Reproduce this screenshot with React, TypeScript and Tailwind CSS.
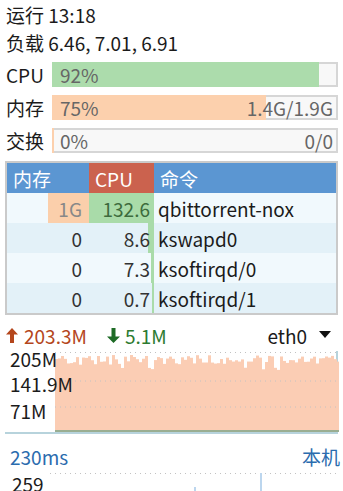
import React from "react";

const FONT = "font-['Noto_Sans_CJK_SC',sans-serif]";

// deterministic pseudo random values for the traffic chart
const makeSeries = (n: number, seed: number) => {
    let s = seed;
    const out: number[] = [];
    for (let i = 0; i < n; i++) {
        s = (s * 9301 + 49297) % 233280;
        const r = s / 233280;
        if (r < 0.08) out.push(15 + r * 50);
        else out.push(4 + ((r * 37) % 10));
    }
    return out;
};

const upSeries = makeSeries(95, 11);

const UsageBar: React.FC<{
    label: string;
    percent: number;
    fill: string;
    left: string;
    right?: string;
}> = ({ label, percent, fill, left, right }) => {
    return (
        <div className="flex items-center h-[25px]">
            <div className="w-[52px] pl-[6px] text-[19px] leading-none text-[#1b1b1b]">
                {label}
            </div>
            <div className="relative flex-1 mr-[5px] h-[25px] border-2 border-[#d6d6d6] bg-[#f8f8f8]">
                <div
                    className={`absolute -left-[2px] -top-[2px] -bottom-[2px] ${fill}`}
                    style={{ width: `calc(${percent}% + 2px)` }}
                />
                <div className="relative flex items-center justify-between h-full pl-[6px] pr-[3px] text-[19px] leading-none text-[#666]">
                    <span>{left}</span>
                    <span>{right}</span>
                </div>
            </div>
        </div>
    );
};

const rows = [
    { mem: "1G", memPct: 50, cpu: "132.6", cpuPct: 100, cmd: "qbittorrent-nox" },
    { mem: "0", memPct: 0, cpu: "8.6", cpuPct: 8.6, cmd: "kswapd0" },
    { mem: "0", memPct: 0, cpu: "7.3", cpuPct: 5, cmd: "ksoftirqd/0" },
    { mem: "0", memPct: 0, cpu: "0.7", cpuPct: 3, cmd: "ksoftirqd/1" },
];

const ProcessTable = () => {
    return (
        <div className="mx-[5px] border-2 border-[#cacaca] text-[19px] leading-none">
            <div className="flex h-[30px] bg-[#5b96d2] text-white">
                <div className="w-[82px] flex items-center pl-[6px]">内存</div>
                <div className="w-[65px] flex items-center pl-[6px] bg-[#cb624e]">CPU</div>
                <div className="flex-1 flex items-center pl-[6px]">命令</div>
            </div>
            {rows.map((r, i) => (
                <div
                    key={r.cmd}
                    className={`flex h-[30px] ${i % 2 === 0 ? "bg-[#f1f9fd]" : "bg-[#e3f1f8]"}`}
                >
                    <div className="w-[82px] flex justify-end">
                        <div
                            className={`flex items-center justify-end h-full pr-[7px] ${
                                r.memPct > 0 ? "bg-[#fbcfab] text-[#888]" : "text-[#333]"
                            }`}
                            style={{ width: r.memPct > 0 ? `${r.memPct}%` : "auto" }}
                        >
                            {r.mem}
                        </div>
                    </div>
                    <div className="relative w-[65px] flex items-center justify-end pr-[4px]">
                        <div
                            className="absolute right-0 top-0 bottom-0 bg-[#a9dba9]"
                            style={{ width: `${r.cpuPct}%` }}
                        />
                        <span className={`relative ${i === 0 ? "text-[#3d6b3d]" : "text-[#333]"}`}>
                            {r.cpu}
                        </span>
                    </div>
                    <div className="flex-1 flex items-center pl-[4px] text-[#1b1b1b]">{r.cmd}</div>
                </div>
            ))}
        </div>
    );
};

const UpArrow = ({ color }: { color: string }) => (
    <svg width="12" height="15" viewBox="0 0 12 15">
        <path d="M6 0 L12 6.5 L8 6.5 L8 15 L4 15 L4 6.5 L0 6.5 Z" fill={color} />
    </svg>
);

const DownArrow = ({ color }: { color: string }) => (
    <svg width="13" height="15" viewBox="0 0 13 15">
        <path d="M6.5 15 L13 8.5 L8.5 8.5 L8.5 0 L4.5 0 L4.5 8.5 L0 8.5 Z" fill={color} />
    </svg>
);

const TrafficChart = () => {
    const w = 284;
    const h = 81;
    return (
        <div className="relative mx-[5px] h-[83px] border-b-2 border-r-2 border-[#b7d3dc]">
            <svg width={w} height={h} className="block ml-[50px]">
                {upSeries.map((top, i) => (
                    <rect key={i} x={i * 3} y={top} width={3} height={h - top} fill="#fbcdb4" />
                ))}
                <rect x={0} y={h - 2} width={w} height={2} fill="#9aae92" />
                {[1.5, 30, 56].map((y) => (
                    <line
                        key={y}
                        x1={0}
                        x2={w}
                        y1={y}
                        y2={y}
                        stroke="#c2c2c2"
                        strokeWidth={1}
                        strokeDasharray="1 4"
                    />
                ))}
            </svg>
            <div className="absolute left-[5px] top-[-2px] text-[19px] leading-[20px] text-[#1b1b1b]">205M</div>
            <div className="absolute left-[5px] top-[23px] text-[19px] leading-[20px] text-[#1b1b1b]">141.9M</div>
            <div className="absolute left-[5px] top-[50px] text-[19px] leading-[20px] text-[#1b1b1b]">71M</div>
        </div>
    );
};

const LatencyChart = () => {
    return (
        <div className="relative mx-[5px] h-[20px] overflow-hidden">
            <svg width={291} height={20} className="block ml-[45px]">
                <line x1={0} x2={291} y1={0.5} y2={0.5} stroke="#c2c2c2" strokeDasharray="1 4" />
                <rect x={144} y={14} width={2} height={10} fill="#bcd6ee" />
                <rect x={210} y={0} width={2} height={20} fill="#bcd6ee" />
            </svg>
            <div className="absolute left-[7px] top-[1px] text-[19px] leading-[20px] text-[#1b1b1b]">259</div>
        </div>
    );
};

export default function App() {
    return (
        <div className={`${FONT} w-[343px] h-[491px] overflow-hidden bg-white text-[#1b1b1b]`}>
            <div className="h-[28px] flex items-center pl-[6px] text-[19px] leading-none">运行 13:18</div>
            <div className="h-[29px] flex items-center pl-[6px] text-[19px] leading-none">
                负载 6.46, 7.01, 6.91
            </div>
            <div className="mt-[5px] flex flex-col gap-[8px]">
                <UsageBar label="CPU" percent={94} fill="bg-[#acdcac]" left="92%" />
                <UsageBar
                    label="内存"
                    percent={75}
                    fill="bg-[#fcd0ad]"
                    left="75%"
                    right="1.4G/1.9G"
                />
                <UsageBar label="交换" percent={0} fill="bg-[#fcd0ad]" left="0%" right="0/0" />
            </div>
            <div className="mt-[8px]">
                <ProcessTable />
            </div>
            <div className="mt-[4px] h-[32px] flex items-center pl-[6px] pr-[12px] text-[19px] leading-none">
                <UpArrow color="#b4461c" />
                <span className="ml-[6px] text-[#b4461c]">203.3M</span>
                <span className="ml-[20px]">
                    <DownArrow color="#1e6b26" />
                </span>
                <span className="ml-[5px] text-[#2c7a30]">5.1M</span>
                <span className="ml-auto">eth0</span>
                <svg width="12" height="8" viewBox="0 0 12 8" className="ml-[12px]">
                    <path d="M0 0 L12 0 L6 7 Z" fill="#111" />
                </svg>
            </div>
            <TrafficChart />
            <div className="h-[39px] flex items-center justify-between px-[10px] pr-[3px] pt-[6px] text-[19px] leading-none text-[#2b6cae]">
                <span>230ms</span>
                <span>本机</span>
            </div>
            <LatencyChart />
        </div>
    );
}
